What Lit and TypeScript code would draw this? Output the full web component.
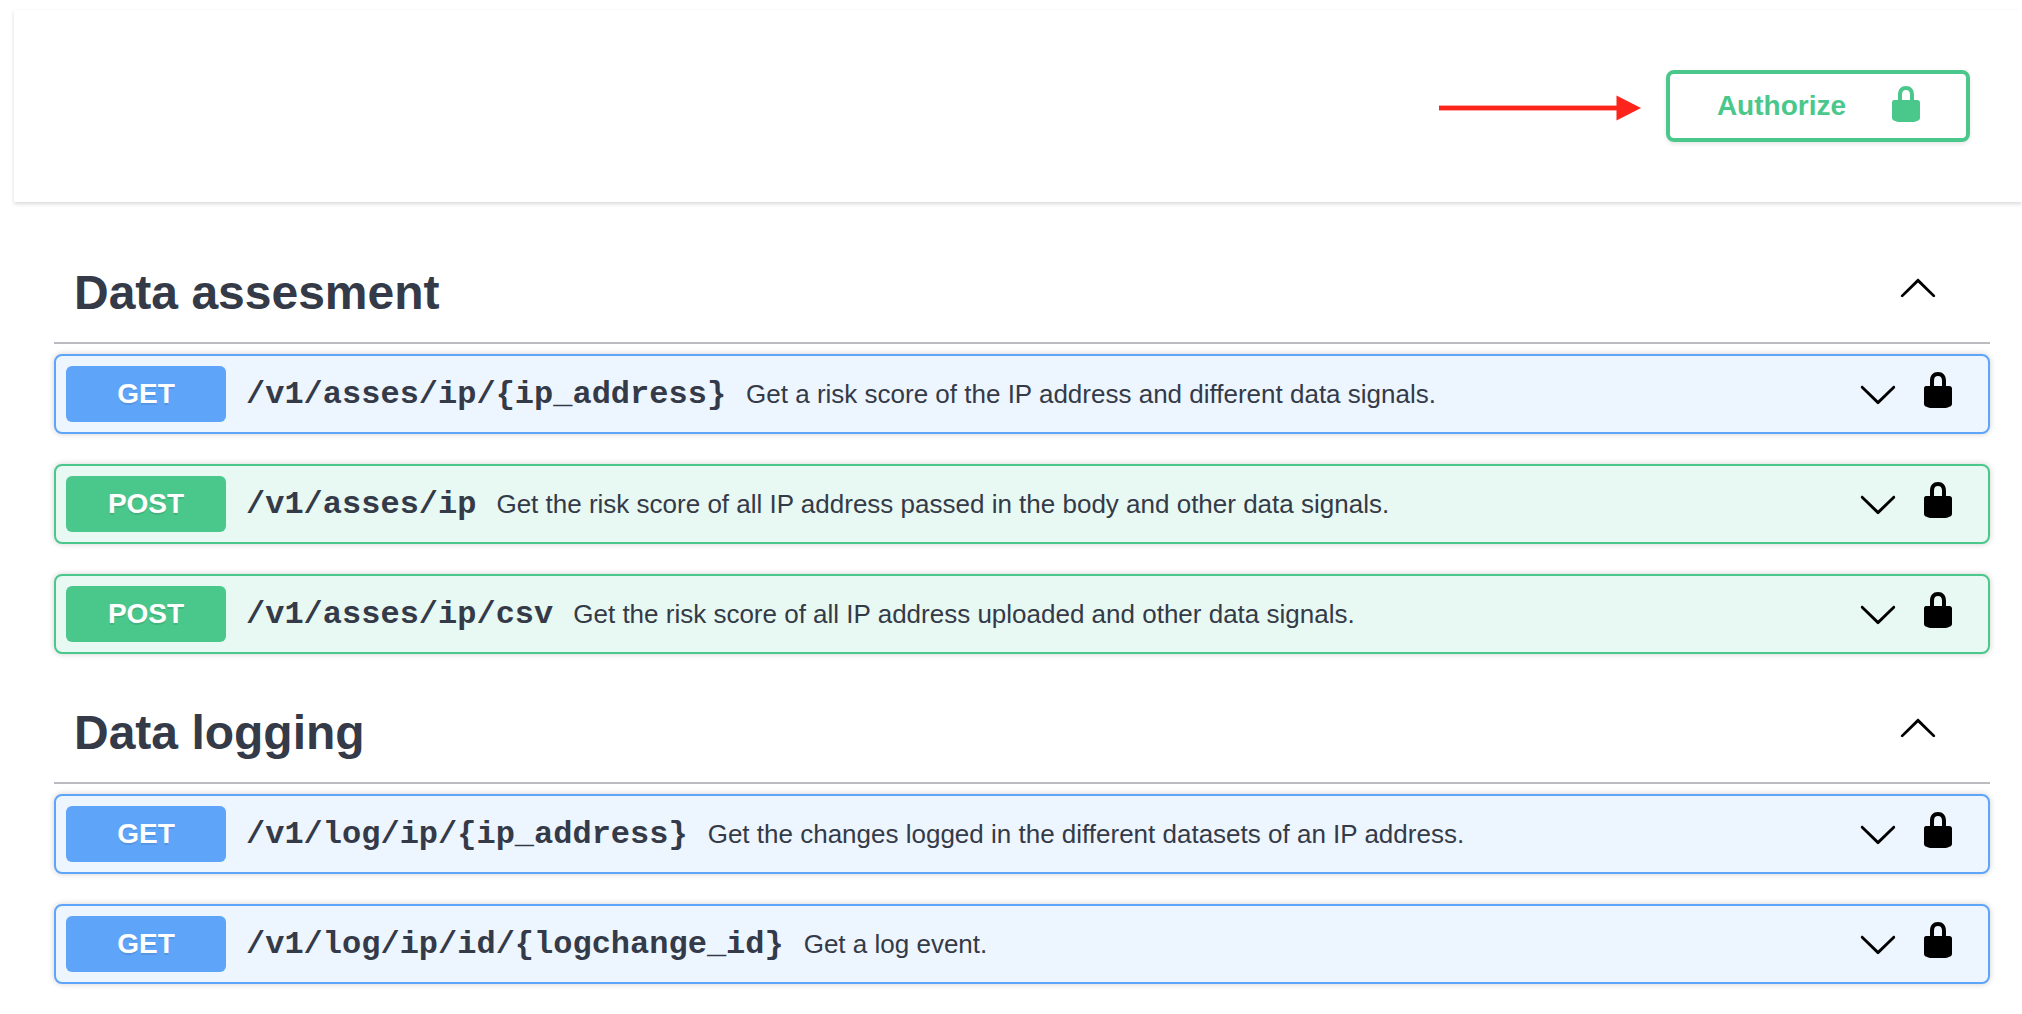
import { LitElement, html, css, svg } from "lit";
import { customElement, property, state } from "lit/decorators.js";

type Method = "get" | "post";

interface Operation {
  method: Method;
  path: string;
  summary: string;
}

interface Section {
  title: string;
  operations: Operation[];
}

const SECTIONS: Section[] = [
  {
    title: "Data assesment",
    operations: [
      {
        method: "get",
        path: "/v1/asses/ip/{ip_address}",
        summary: "Get a risk score of the IP address and different data signals.",
      },
      {
        method: "post",
        path: "/v1/asses/ip",
        summary: "Get the risk score of all IP address passed in the body and other data signals.",
      },
      {
        method: "post",
        path: "/v1/asses/ip/csv",
        summary: "Get the risk score of all IP address uploaded and other data signals.",
      },
    ],
  },
  {
    title: "Data logging",
    operations: [
      {
        method: "get",
        path: "/v1/log/ip/{ip_address}",
        summary: "Get the changes logged in the different datasets of an IP address.",
      },
      {
        method: "get",
        path: "/v1/log/ip/id/{logchange_id}",
        summary: "Get a log event.",
      },
    ],
  },
];

const icon = (shape: unknown) => html`
  <svg class="icon" viewBox="0 0 20 20" width="40" height="40" aria-hidden="true">${shape}</svg>
`;

const lockShape = svg`<path d="M15.8 8H14V5.6C14 2.703 12.665 1 10 1 7.334 1 6 2.703 6 5.6V8H4c-.553 0-1 .646-1 1.199V17c0 .549.428 1.139.951 1.307l1.197.387C5.672 18.861 6.55 19 7.1 19h5.8c.549 0 1.428-.139 1.951-.307l1.196-.387c.524-.167.953-.757.953-1.306V9.199C17 8.646 16.352 8 15.8 8zM12 8H8V5.199C8 3.754 8.797 3 10 3c1.203 0 2 .754 2 2.199V8z"/>`;

const chevronDown = svg`<path d="M17.418 6.109c.272-.268.709-.268.979 0s.271.701 0 .969l-7.908 7.83c-.27.268-.707.268-.979 0l-7.908-7.83c-.27-.268-.27-.701 0-.969s.709-.268.979 0L10 13.25z"/>`;

const chevronUp = svg`<path d="M17.418 14.908c.272.27.709.27.979 0s.271-.701 0-.969l-7.908-7.83c-.27-.268-.707-.268-.979 0l-7.908 7.83c-.27.268-.27.701 0 .969s.709.27.979 0L10 7.767z"/>`;

const controls = css`
  button {
    margin: 0;
    padding: 0;
    border: 0;
    background: none;
    color: inherit;
    font: inherit;
    text-align: left;
    cursor: pointer;
  }
  .icon {
    display: block;
    flex: none;
    fill: currentColor;
  }
`;

@customElement("api-operation")
export class ApiOperation extends LitElement {
  @property({ attribute: false }) operation!: Operation;
  @state() private open = false;

  static styles = [
    controls,
    css`
      :host {
        display: block;
      }
      .row {
        display: flex;
        align-items: center;
        gap: 20px;
        padding: 10px 30px 10px 10px;
        border: 2px solid var(--accent);
        border-radius: 8px;
        background: var(--tint);
        box-shadow: 0 0 6px rgba(0, 0, 0, 0.19);
      }
      .get {
        --accent: #5ea5fa;
        --tint: #edf5ff;
      }
      .post {
        --accent: #4ac78b;
        --tint: #e8f8f2;
      }
      .row .summary {
        display: flex;
        flex: 1;
        align-items: center;
        gap: 20px;
        min-width: 0;
      }
      .method {
        flex: none;
        width: 160px;
        border-radius: 6px;
        background: var(--accent);
        color: #fff;
        font-size: 28px;
        font-weight: 700;
        line-height: 56px;
        text-align: center;
        text-shadow: 0 2px 0 rgba(0, 0, 0, 0.1);
      }
      .path {
        padding-top: 2px;
        font-family: "Liberation Mono", monospace;
        font-size: 32px;
        font-weight: 700;
        line-height: 40px;
      }
      .text {
        flex: 1;
        font-size: 26px;
        line-height: 32px;
      }
      .icon {
        color: #000;
      }
      .lock {
        margin-bottom: 8px;
      }
    `,
  ];

  render() {
    const { method, path, summary } = this.operation;
    return html`
      <div class="row ${method}">
        <button
          class="summary"
          aria-expanded=${this.open ? "true" : "false"}
          @click=${() => (this.open = !this.open)}
        >
          <span class="method">${method.toUpperCase()}</span>
          <span class="path">${path}</span>
          <span class="text">${summary}</span>
          ${icon(this.open ? chevronUp : chevronDown)}
        </button>
        <button class="lock" aria-label="Authorization for ${path}">${icon(lockShape)}</button>
      </div>
    `;
  }
}

@customElement("api-section")
export class ApiSection extends LitElement {
  @property({ attribute: false }) section!: Section;
  @state() private open = true;

  static styles = [
    controls,
    css`
      :host {
        display: block;
      }
      .heading {
        display: flex;
        align-items: center;
        justify-content: space-between;
        margin-bottom: 10px;
        padding: 0 52px 21px 20px;
        border-bottom: 2px solid #bcbbc1;
      }
      h2 {
        margin: 0;
        font-size: 48px;
        font-weight: 700;
        line-height: 56px;
      }
      .toggle {
        margin-bottom: 12px;
      }
      .icon {
        color: #000;
      }
      .operations {
        display: grid;
        gap: 30px;
      }
    `,
  ];

  render() {
    const { title, operations } = this.section;
    return html`
      <section>
        <div class="heading">
          <h2>${title}</h2>
          <button
            class="toggle"
            aria-label="Toggle ${title}"
            aria-expanded=${this.open ? "true" : "false"}
            @click=${() => (this.open = !this.open)}
          >
            ${icon(this.open ? chevronUp : chevronDown)}
          </button>
        </div>
        ${this.open
          ? html`<div class="operations">
              ${operations.map((op) => html`<api-operation .operation=${op}></api-operation>`)}
            </div>`
          : null}
      </section>
    `;
  }
}

@customElement("app-root")
export class AppRoot extends LitElement {
  static styles = [
    controls,
    css`
      :host {
        display: flow-root;
        min-height: 100vh;
        background: #fff;
        color: #343a47;
        font-family: "Liberation Sans", Arial, sans-serif;
      }
      .schemes {
        display: flex;
        align-items: center;
        justify-content: flex-end;
        gap: 25px;
        margin: 10px 0 0 14px;
        padding: 60px 52px 60px 40px;
        background: #fff;
        box-shadow: 0 2px 4px rgba(0, 0, 0, 0.15);
      }
      .arrow {
        display: block;
        flex: none;
        fill: #fd251b;
      }
      .schemes .authorize {
        display: flex;
        align-items: center;
        gap: 40px;
        padding: 12px 40px 12px 47px;
        border: 4px solid #4ac78b;
        border-radius: 8px;
        color: #4ac78b;
        font-size: 28px;
        font-weight: 700;
        line-height: 40px;
        box-shadow: 0 2px 4px rgba(0, 0, 0, 0.1);
      }
      .authorize .icon {
        margin: -2px 0 2px;
      }
      main {
        display: grid;
        gap: 51px;
        padding: 63px 32px 30px 54px;
      }
    `,
  ];

  render() {
    return html`
      <header class="schemes">
        <svg class="arrow" viewBox="0 0 202 30" width="202" height="30" aria-hidden="true">
          <rect x="0" y="14.6" width="180" height="4.8" />
          <path d="M177.500 4.500L202 17L177.500 29.500z" />
        </svg>
        <button class="authorize">
          <span>Authorize</span>
          ${icon(lockShape)}
        </button>
      </header>
      <main>
        ${SECTIONS.map((section) => html`<api-section .section=${section}></api-section>`)}
      </main>
    `;
  }
}
